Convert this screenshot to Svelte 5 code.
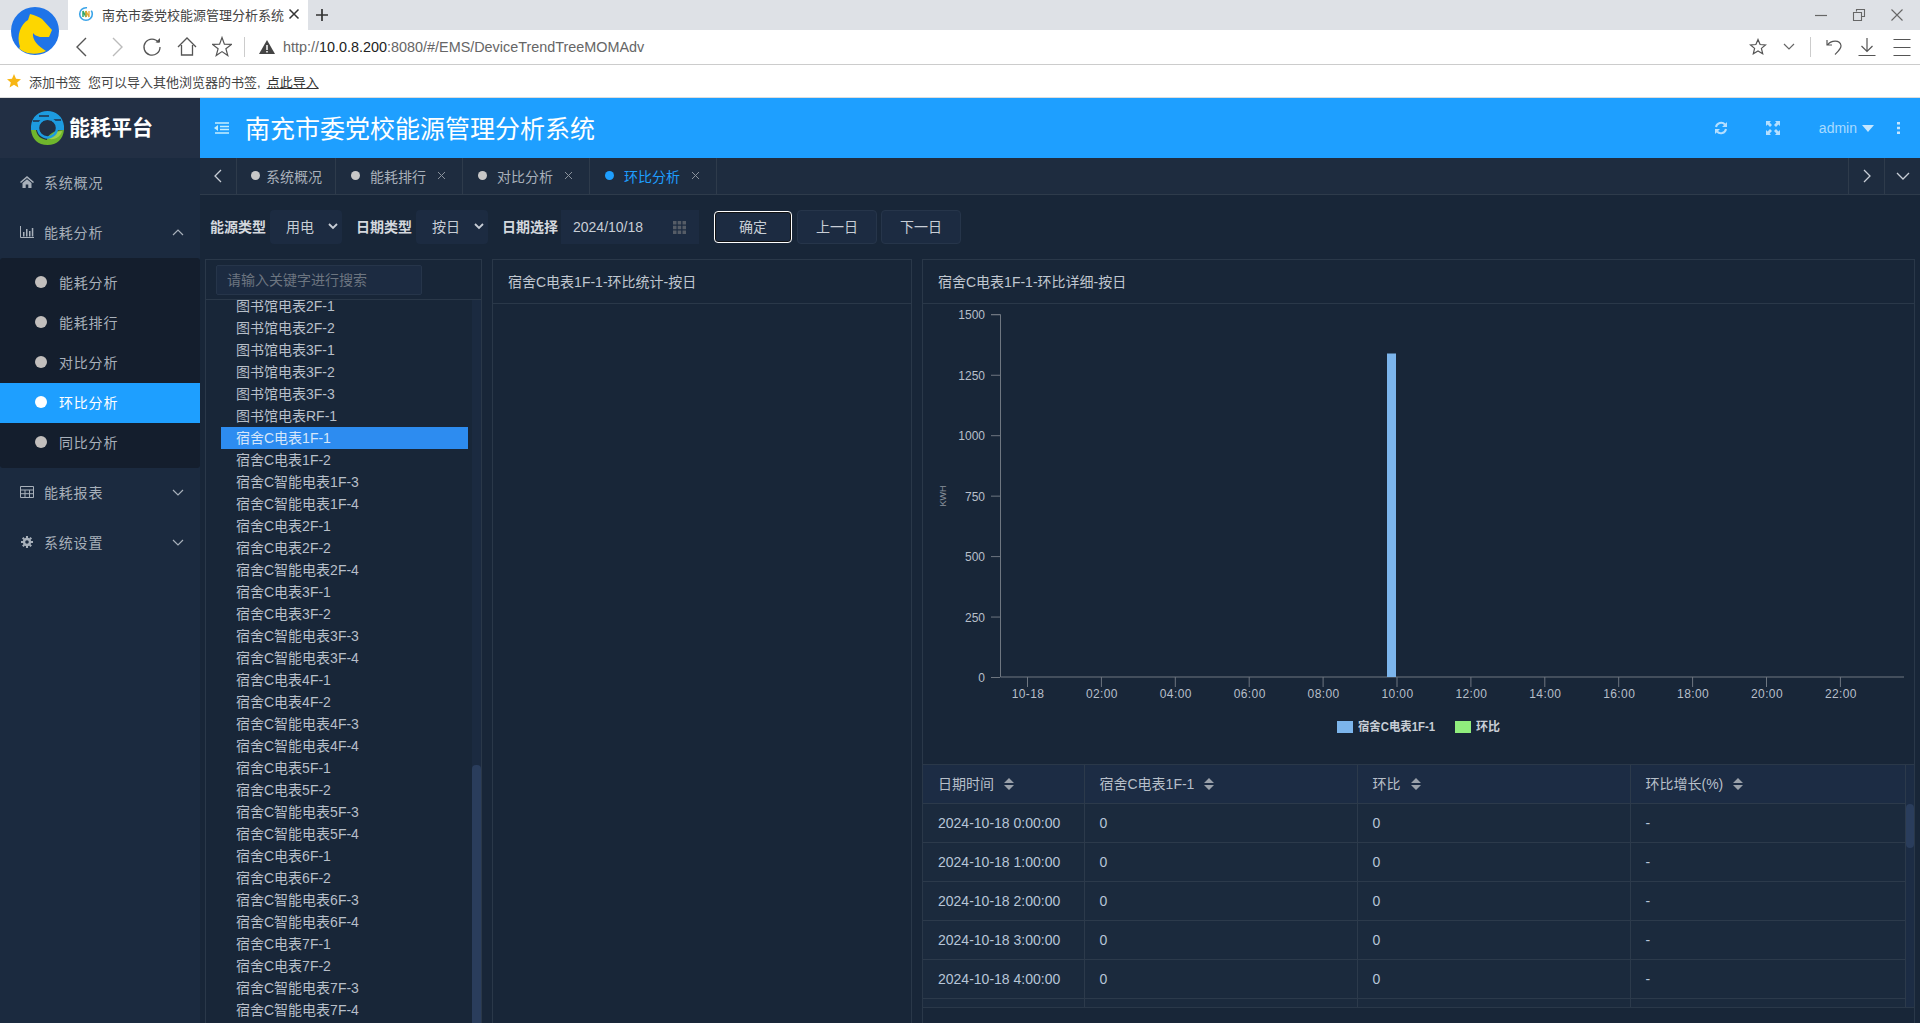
<script>
  const tabs = [
    { name: "系统概况", closable: false },
    { name: "能耗排行", closable: true },
    { name: "对比分析", closable: true },
    { name: "环比分析", closable: true, active: true }
  ];
  const subMenu = ["能耗分析", "能耗排行", "对比分析", "环比分析", "同比分析"];
  const devices = [
    "图书馆电表2F-1", "图书馆电表2F-2", "图书馆电表3F-1", "图书馆电表3F-2", "图书馆电表3F-3", "图书馆电表RF-1",
    "宿舍C电表1F-1", "宿舍C电表1F-2", "宿舍C智能电表1F-3", "宿舍C智能电表1F-4",
    "宿舍C电表2F-1", "宿舍C电表2F-2", "宿舍C智能电表2F-4",
    "宿舍C电表3F-1", "宿舍C电表3F-2", "宿舍C智能电表3F-3", "宿舍C智能电表3F-4",
    "宿舍C电表4F-1", "宿舍C电表4F-2", "宿舍C智能电表4F-3", "宿舍C智能电表4F-4",
    "宿舍C电表5F-1", "宿舍C电表5F-2", "宿舍C智能电表5F-3", "宿舍C智能电表5F-4",
    "宿舍C电表6F-1", "宿舍C电表6F-2", "宿舍C智能电表6F-3", "宿舍C智能电表6F-4",
    "宿舍C电表7F-1", "宿舍C电表7F-2", "宿舍C智能电表7F-3", "宿舍C智能电表7F-4"
  ];
  const selected = "宿舍C电表1F-1";
  const columns = ["日期时间", "宿舍C电表1F-1", "环比", "环比增长(%)"];
  const rows = [0, 1, 2, 3, 4].map((h) => `2024-10-18 ${h}:00:00`);

  // chart uses page coordinates through the viewBox
  const y0 = 676;
  const yStep = 60.45;
  const yTicks = [0, 250, 500, 750, 1000, 1250, 1500];
  const xLabels = ["10-18", "02:00", "04:00", "06:00", "08:00", "10:00", "12:00", "14:00", "16:00", "18:00", "20:00", "22:00"];
</script>

<div class="page">
  <!-- browser chrome -->
  <div class="tabstrip">
    <div class="btab">
      <svg class="favicon" viewBox="0 0 16 16" width="16" height="16">
        <circle cx="8" cy="8" r="6.3" fill="none" stroke="#3aa4e8" stroke-width="1.6" stroke-dasharray="30 5"/>
        <path d="M5 11V5l3 6V5" fill="none" stroke="#2fa66a" stroke-width="1.5"/>
        <path d="M8 11V5l3 6V5" fill="none" stroke="#e8a62c" stroke-width="1.3"/>
      </svg>
      <span class="btitle">南充市委党校能源管理分析系统</span>
      <svg viewBox="0 0 12 12" width="12" height="12"><path d="M1.5 1.5l9 9M10.5 1.5l-9 9" stroke="#333" stroke-width="1.5"/></svg>
    </div>
    <svg class="plus" viewBox="0 0 14 14" width="14" height="14"><path d="M7 1v12M1 7h12" stroke="#333" stroke-width="1.7"/></svg>
    <div class="winctl">
      <svg viewBox="0 0 14 14" width="14" height="14"><path d="M1 7.5h12" stroke="#666" stroke-width="1.2"/></svg>
      <svg viewBox="0 0 14 14" width="14" height="14"><path d="M4.5 3.5V1.5h8v7h-2.5M1.5 4.5h8v8h-8z" fill="none" stroke="#666" stroke-width="1.1"/></svg>
      <svg viewBox="0 0 14 14" width="14" height="14"><path d="M1.500 1.500l11 11M12.500 1.500l-11 11" stroke="#666" stroke-width="1.1"/></svg>
    </div>
  </div>

  <div class="addr">
    <svg class="nav first" viewBox="0 0 20 24" width="20" height="24"><path d="M14 3L5 12l9 9" fill="none" stroke="#555" stroke-width="1.4"/></svg>
    <svg class="nav" viewBox="0 0 20 24" width="20" height="24"><path d="M6 3l9 9-9 9" fill="none" stroke="#bbb" stroke-width="1.4"/></svg>
    <svg class="nav" viewBox="0 0 20 24" width="20" height="24"><path d="M16.500 7.500A8 8 0 1 0 18 12" fill="none" stroke="#555" stroke-width="1.300"/><path d="M13.500 7.500h4.500V3z" fill="#555"/></svg>
    <svg class="nav" viewBox="0 0 20 24" width="20" height="24"><path d="M1 12l9-9 9 9M4.500 10v10h11V10" fill="none" stroke="#555" stroke-width="1.3"/></svg>
    <svg class="nav" viewBox="0 0 20 24" width="20" height="24"><path d="M10 2.500l2.400 6.600 7 .3-5.500 4.300 1.900 6.800-5.800-3.900-5.800 3.900 1.900-6.800L.6 9.400l7-.3z" fill="none" stroke="#555" stroke-width="1.200"/></svg>
    <span class="vline"></span>
    <svg class="warn" viewBox="0 0 16 14" width="16" height="14"><path d="M8 0l8 14H0z" fill="#444"/><path d="M8 5v5M8 11v1.500" stroke="#fff" stroke-width="1.500"/></svg>
    <span class="url">http://<b>10.0.8.200</b>:8080/#/EMS/DeviceTrendTreeMOMAdv</span>
    <div class="addr-right">
      <svg viewBox="0 0 18 18" width="18" height="18"><path d="M9 1.500l2.100 5 5.400.4-4.100 3.500 1.300 5.300L9 12.900l-4.700 2.800 1.300-5.300L1.500 6.900l5.400-.4z" fill="none" stroke="#555" stroke-width="1.200"/></svg>
      <svg class="drop" viewBox="0 0 12 8" width="12" height="8"><path d="M1 1l5 5 5-5" fill="none" stroke="#666" stroke-width="1.200"/></svg>
      <span class="vline short"></span>
      <svg class="undo" viewBox="0 0 16 18" width="16" height="18"><path d="M1 2v5h5M1.500 7C5 2 14 1.500 15 7.500c.4 3-3 6-6 9" fill="none" stroke="#555" stroke-width="1.200"/></svg>
      <svg class="down" viewBox="0 0 18 18" width="18" height="18"><path d="M9 0v13M3.500 8L9 13.500 14.500 8M.5 17.500h17" fill="none" stroke="#555" stroke-width="1.200"/></svg>
      <svg class="menu" viewBox="0 0 18 18" width="18" height="18"><path d="M.5 1.500h17M.5 9.500h17M.5 17.500h17" stroke="#555" stroke-width="1.100"/></svg>
    </div>
  </div>

  <div class="bookmarks">
    <svg viewBox="0 0 14 14" width="14" height="14"><path d="M7 0l2 4.800 5 .4-3.800 3.300 1.200 5L7 10.800 2.600 13.500l1.200-5L0 5.200l5-.4z" fill="#f7b614"/></svg>
    <span class="bm1">添加书签</span>
    <span>您可以导入其他浏览器的书签,</span>
    <u>点此导入</u>
  </div>

  <!-- browser logo lies over the tab strip -->
  <svg class="blogo" viewBox="0 0 48 48" width="48" height="48">
    <circle cx="24" cy="24" r="24" fill="#1f74e8"/>
    <path d="M9 40C5 28 10 17 17 13l2-6c5 1 9 3 12 5l10 11-3 7-9 0c-3-1-6-2-7-4-1 7 5 13 13 18-8 4-21 4-27-3z" fill="#fdd600"/>
  </svg>

  <div class="app">
    <header class="top">
      <div class="brand">
        <svg viewBox="0 0 33 34" width="33" height="34">
          <path d="M0 19C-1 7 7 0 16.500 0S34 7 33 19h-6.500a10 10 0 0 0-20 0z" fill="#1d9be0"/>
          <path d="M8 5h10M20 9h10M2 10h9" stroke="#222f44" stroke-width="1.300"/>
          <path d="M0 19h5c1 6 5 9 11 10 0-5 7-10 17-10-1 9-7 15-16.500 15S1 28 0 19z" fill="#6fb62c"/>
          <path d="M18 28c1-4 7-8 13-8-1 5-6 9-13 8z" fill="#9bd04a"/>
          <circle cx="16.500" cy="17" r="9.500" fill="none" stroke="#1d9be0" stroke-width="2.400"/>
        </svg>
        <span>能耗平台</span>
      </div>
      <svg class="fold" viewBox="0 0 15 12" width="15" height="12"><path d="M1 1h14M1 11h14M6 4.500h9M6 7.500h9" stroke="#c5eeff" stroke-width="1.600"/><path d="M0 6l4-3v6z" fill="#c5eeff"/></svg>
      <h1>南充市委党校能源管理分析系统</h1>
      <div class="top-right">
        <svg viewBox="0 0 14 14" width="14" height="14"><path d="M2 6a5.200 5.200 0 0 1 9-2.500M12 8a5.200 5.200 0 0 1-9 2.500" fill="none" stroke="#b5dfff" stroke-width="2"/><path d="M13 1v5H8zM1 13V8h5z" fill="#b5dfff"/></svg>
        <svg class="full" viewBox="0 0 14 14" width="14" height="14"><path d="M0 0h5L3.600 1.600 6 4 4 6 1.600 3.600 0 5zM14 0v5l-1.600-1.600L10 6 8 4l2.400-2.400L9 0zM0 14V9l1.600 1.600L4 8l2 2-2.400 2.400L5 14zM14 14H9l1.400-1.600L8 10l2-2 2.400 2.400L14 9z" fill="#b5dfff"/></svg>
        <span class="admin">admin</span>
        <svg class="caret" viewBox="0 0 12 7" width="12" height="7"><path d="M0 0h12L6 7z" fill="#c5e6ff"/></svg>
        <svg class="more" viewBox="0 0 3 12" width="3" height="12"><path d="M0 0h3v2.500H0zM0 4.700h3v2.500H0zM0 9.500h3V12H0z" fill="#c5e6ff"/></svg>
      </div>
    </header>

    <div class="body">
      <aside class="side">
        <div class="m-item">
          <svg viewBox="0 0 14 12" width="14" height="12"><path d="M7 0l7 6-1 1-6-5-6 5-1-1zM2.500 7L7 3.300 11.500 7v5H8.300V8.500H5.700V12H2.500z" fill="#a8b0ba"/></svg>
          <span>系统概况</span>
        </div>
        <div class="m-item">
          <svg viewBox="0 0 14 12" width="14" height="12"><path d="M.5 0v11.500H14" fill="none" stroke="#a8b0ba"/><path d="M3 6h1.500v4.500H3zM6 3h1.500v7.500H6zM9 5h1.500v5.500H9zM11.800 2h1.500v8.500h-1.500z" fill="#a8b0ba"/></svg>
          <span>能耗分析</span>
          <svg class="chev" viewBox="0 0 12 7" width="12" height="7"><path d="M1 6l5-5 5 5" fill="none" stroke="#a8b0ba" stroke-width="1.200"/></svg>
        </div>
        <div class="sub">
          {#each subMenu as item}
            <div class="s-item" class:on={item === "环比分析"}><i></i>{item}</div>
          {/each}
        </div>
        <div class="m-item">
          <svg viewBox="0 0 14 12" width="14" height="12"><path d="M.5.500h13v11H.5zM.5 4h13M.5 7.700h13M5 4v7.500M9.500 4v7.500" fill="none" stroke="#a8b0ba"/></svg>
          <span>能耗报表</span>
          <svg class="chev" viewBox="0 0 12 7" width="12" height="7"><path d="M1 1l5 5 5-5" fill="none" stroke="#a8b0ba" stroke-width="1.200"/></svg>
        </div>
        <div class="m-item">
          <svg class="gear" viewBox="0 0 14 14" width="12" height="12"><circle cx="7" cy="7" r="3.500" fill="none" stroke="#a8b0ba" stroke-width="2.800"/><path d="M7 0v14M0 7h14M2 2l10 10M12 2L2 12" stroke="#a8b0ba" stroke-width="2.400" stroke-dasharray="2.500 9 2.500"/></svg>
          <span>系统设置</span>
          <svg class="chev" viewBox="0 0 12 7" width="12" height="7"><path d="M1 1l5 5 5-5" fill="none" stroke="#a8b0ba" stroke-width="1.200"/></svg>
        </div>
      </aside>

      <main class="content">
        <nav class="tabs">
          <div class="t-btn left"><svg viewBox="0 0 8 14" width="8" height="14"><path d="M7 1L1 7l6 6" fill="none" stroke="#c8ced6" stroke-width="1.300"/></svg></div>
          {#each tabs as tab}
            <div class="tab" class:active={tab.active} class:plain={!tab.closable}>
              <i></i><span>{tab.name}</span>
              {#if tab.closable}
                <svg viewBox="0 0 9 9" width="9" height="9"><path d="M1 1l7 7M8 1L1 8" stroke="#8a929c" stroke-width="1"/></svg>
              {/if}
            </div>
          {/each}
          <div class="t-btn right"><svg viewBox="0 0 8 14" width="8" height="14"><path d="M1 1l6 6-6 6" fill="none" stroke="#c8ced6" stroke-width="1.300"/></svg></div>
          <div class="t-btn last"><svg viewBox="0 0 14 8" width="14" height="8"><path d="M1 1l6 6 6-6" fill="none" stroke="#c8ced6" stroke-width="1.300"/></svg></div>
        </nav>

        <div class="filter">
          <label class="first">能源类型</label>
          <div class="select">用电<svg viewBox="0 0 10 7" width="10" height="7"><path d="M1 1l4 4 4-4" fill="none" stroke="#c8ced6" stroke-width="1.800"/></svg></div>
          <label>日期类型</label>
          <div class="select">按日<svg viewBox="0 0 10 7" width="10" height="7"><path d="M1 1l4 4 4-4" fill="none" stroke="#c8ced6" stroke-width="1.800"/></svg></div>
          <label>日期选择</label>
          <div class="date">
            <span>2024/10/18</span>
            <svg viewBox="0 0 13 13" width="13" height="13"><path d="M0 0h3.500v3.500H0zM4.700 0h3.500v3.500H4.700zM9.500 0H13v3.500H9.500zM0 4.700h3.500v3.500H0zM4.700 4.700h3.500v3.500H4.700zM9.500 4.700H13v3.500H9.500zM0 9.500h3.500V13H0zM4.700 9.500h3.500V13H4.700zM9.500 9.500H13V13H9.500z" fill="#555c66"/></svg>
          </div>
          <button class="btn ok">确定</button>
          <button class="btn">上一日</button>
          <button class="btn">下一日</button>
        </div>

        <div class="panels">
          <section class="panel tree">
            <div class="search"><div class="input">请输入关键字进行搜索</div></div>
            <div class="tree-body">
              <ul>
                {#each devices as d}
                  <li class:sel={d === selected}>{d}</li>
                {/each}
              </ul>
              <div class="track"><div class="thumb"></div></div>
            </div>
          </section>

          <section class="panel mid">
            <div class="p-head">宿舍C电表1F-1-环比统计-按日</div>
          </section>

          <section class="panel detail">
            <div class="p-head">宿舍C电表1F-1-环比详细-按日</div>
            <svg class="chart" viewBox="923 303 991 460" width="991" height="460">
              <path d="M991 313.500h9.500V{y0}H1904" fill="none" stroke="#6e7680"/>
              {#each yTicks as t, i}
                <path d="M991 {y0 - i * yStep + 0.5}h9" stroke="#6e7680"/>
                <text class="ax" x="985" y={y0 - i * yStep + 5} text-anchor="end">{t}</text>
              {/each}
              {#each xLabels as l, i}
                <path d="M{1027.500 + i * 73.900} 676v10" stroke="#6e7680"/>
                <text class="ax wide" x={1028 + i * 73.900} y="697" text-anchor="middle">{l}</text>
              {/each}
              <text class="unit" transform="translate(946 495) rotate(-90)" text-anchor="middle">KWH</text>
              <rect x="1387" y="352.500" width="9" height="323.500" fill="#7cb5ec"/>
              <rect x="1337" y="720" width="16" height="12" fill="#7cb5ec"/>
              <text class="lg" x="1358" y="730" textLength="77" lengthAdjust="spacingAndGlyphs">宿舍C电表1F-1</text>
              <rect x="1455" y="720" width="16" height="12" fill="#90ed7d"/>
              <text class="lg" x="1476" y="730">环比</text>
            </svg>
            <div class="grid">
              <table>
                <colgroup><col style="width:161px"/><col style="width:273px"/><col style="width:273px"/><col style="width:275px"/></colgroup>
                <thead>
                  <tr>
                    {#each columns as c}
                      <th><span class="th-t">{c}</span><svg viewBox="0 0 10 12" width="10" height="12"><path d="M5 0l5 5H0zM5 12L0 7h10z" fill="#9aa1aa"/></svg></th>
                    {/each}
                  </tr>
                </thead>
                <tbody>
                  {#each rows as r}
                    <tr><td>{r}</td><td>0</td><td>0</td><td>-</td></tr>
                  {/each}
                  <tr><td></td><td></td><td></td><td></td></tr>
                </tbody>
              </table>
              <div class="g-track"><div class="g-thumb"></div></div>
            </div>
          </section>
        </div>
      </main>
    </div>
  </div>
</div>

<style>
  :global(body) {
    margin: 0;
    background: #182638;
  }

  .page {
    position: relative;
    height: 100vh;
    overflow: hidden;
    display: flex;
    flex-direction: column;
    font-family: "Liberation Sans", "Noto Sans CJK SC", sans-serif;
    font-size: 14px;
    color: #b7bfc9;
  }

  svg {
    display: block;
    flex: none;
  }

  /* browser */
  .tabstrip {
    height: 30px;
    background: #dee1e6;
    display: flex;
    align-items: center;
    flex: none;
  }

  .btab {
    margin-left: 68px;
    width: 240px;
    height: 30px;
    box-sizing: border-box;
    padding: 0 9px 2px 10px;
    background: #fff;
    display: flex;
    align-items: center;
    color: #444;
    font-size: 13px;
  }

  .btitle {
    margin-left: 8px;
    margin-right: 4px;
    white-space: nowrap;
  }

  .plus {
    margin-left: 7px;
  }

  .winctl {
    margin-left: auto;
    margin-right: 16px;
    display: flex;
    gap: 24px;
  }

  .addr {
    height: 34px;
    background: #fff;
    border-bottom: 1px solid #ccc;
    display: flex;
    align-items: center;
    padding-top: 0;
    flex: none;
  }

  .nav {
    margin-left: 15px;
  }

  .nav.first {
    margin-left: 72px;
  }

  .vline {
    width: 1px;
    height: 20px;
    background: #ccc;
    margin-left: 12px;
  }

  .warn {
    margin-left: 14px;
  }

  .url {
    margin-left: 8px;
    font-size: 14.4px;
    color: #666;
    white-space: nowrap;
  }

  .url b {
    font-weight: normal;
    color: #222;
  }

  .addr-right {
    margin-left: auto;
    margin-right: 9px;
    display: flex;
    align-items: center;
  }

  .drop {
    margin-left: 16px;
  }

  .vline.short {
    margin-left: 15px;
  }

  .undo {
    margin-left: 15px;
  }

  .down {
    margin-left: 16px;
  }

  .menu {
    margin-left: 17px;
  }

  .bookmarks {
    height: 32px;
    background: #fff;
    border-bottom: 1px solid #ddd;
    display: flex;
    align-items: center;
    padding-left: 7px;
    font-size: 13px;
    color: #444;
    flex: none;
  }

  .bm1 {
    margin-left: 8px;
    margin-right: 7px;
  }

  .bookmarks u {
    margin-left: 6px;
    color: #333;
  }

  .blogo {
    position: absolute;
    left: 11px;
    top: 7px;
  }

  /* app */
  .app {
    flex: 1;
    display: flex;
    flex-direction: column;
    min-height: 0;
  }

  .top {
    height: 60px;
    flex: none;
    background: #1e9fff;
    display: flex;
    align-items: center;
  }

  .brand {
    width: 200px;
    height: 60px;
    background: #222f44;
    display: flex;
    align-items: center;
    box-sizing: border-box;
    padding-left: 31px;
    flex: none;
  }

  .brand span {
    margin-left: 5px;
    margin-bottom: 4px;
    color: #fff;
    font-size: 21px;
    font-weight: bold;
    white-space: nowrap;
  }

  .fold {
    margin-left: 14px;
  }

  h1 {
    margin: 0 0 2px 16px;
    font-size: 25px;
    font-weight: normal;
    color: #fff;
    white-space: nowrap;
  }

  .top-right {
    margin-left: auto;
    display: flex;
    align-items: center;
    color: #a8dbff;
    padding-right: 20px;
  }

  .full {
    margin-left: 38px;
  }

  .admin {
    margin-left: 39px;
  }

  .caret {
    margin-left: 5px;
  }

  .more {
    margin-left: 23px;
  }

  .body {
    flex: 1;
    display: flex;
    min-height: 0;
  }

  .side {
    width: 200px;
    flex: none;
    background: #1b2a3f;
  }

  .m-item {
    height: 50px;
    box-sizing: border-box;
    display: flex;
    align-items: center;
    padding: 0 16px 2px 20px;
    letter-spacing: 0.8px;
    color: #a8b0ba;
  }

  .m-item span {
    margin-left: 10px;
  }

  .gear {
    margin: 0 1px;
  }

  .chev {
    margin-left: auto;
  }

  .sub {
    background: #141e2d;
    padding: 5px 0;
    border-radius: 3px;
  }

  .s-item {
    height: 40px;
    box-sizing: border-box;
    display: flex;
    align-items: center;
    padding: 0 0 2px 35px;
    letter-spacing: 0.8px;
    color: #a8b0ba;
  }

  .s-item i {
    width: 12px;
    height: 12px;
    border-radius: 50%;
    background: #c2bebc;
    margin-right: 12px;
    flex: none;
  }

  .s-item.on {
    background: #1e9fff;
    color: #fff;
  }

  .s-item.on i {
    background: #fff;
  }

  .content {
    flex: 1;
    min-width: 0;
    display: flex;
    flex-direction: column;
    background: #182638;
  }

  .tabs {
    height: 36px;
    flex: none;
    box-sizing: content-box;
    background: #1e2c3f;
    border-bottom: 1px solid #2e3b4b;
    display: flex;
  }

  .t-btn {
    display: flex;
    align-items: center;
    justify-content: center;
  }

  .t-btn.left {
    width: 36px;
    border-right: 1px solid #2e3b4b;
  }

  .t-btn.right {
    margin-left: auto;
    width: 35px;
    border-left: 1px solid #2e3b4b;
  }

  .t-btn.last {
    width: 35px;
    border-left: 1px solid #2e3b4b;
  }

  .tab {
    width: 127px;
    box-sizing: border-box;
    padding: 0 16px 1px 15px;
    border-right: 1px solid #2e3b4b;
    display: flex;
    align-items: center;
    color: #a8b0ba;
  }

  .tab.plain {
    width: 99px;
    padding-left: 14px;
    padding-right: 0;
  }

  .tab i {
    width: 9px;
    height: 9px;
    border-radius: 50%;
    background: #c8c8c8;
    margin-right: 10px;
    flex: none;
  }

  .tab.plain i {
    margin-right: 6px;
  }

  .tab span {
    margin-right: 11px;
    white-space: nowrap;
  }

  .tab.plain span {
    margin-right: 0;
  }

  .tab.active {
    color: #1e9fff;
  }

  .tab.active i {
    background: #1e9fff;
  }

  .filter {
    display: flex;
    align-items: center;
    height: 34px;
    flex: none;
    padding: 15px 0 15px 10px;
    color: #c8ced6;
  }

  label {
    font-weight: bold;
    margin-left: 14px;
    margin-right: 4px;
    padding-bottom: 2px;
    white-space: nowrap;
    color: #d4d8de;
  }

  label.first {
    margin-left: 0;
    margin-right: 4px;
  }

  .select {
    width: 72px;
    height: 34px;
    box-sizing: border-box;
    padding: 0 4px 2px 16px;
    background: #1c2b41;
    border-radius: 4px;
    display: flex;
    align-items: center;
    justify-content: space-between;
  }

  .date {
    width: 138px;
    height: 34px;
    box-sizing: border-box;
    padding: 0 13px 0 12px;
    background: #1c2b41;
    display: flex;
    align-items: center;
    justify-content: space-between;
    margin-left: -1px;
  }

  .btn {
    width: 80px;
    height: 34px;
    margin-left: 4px;
    background: #1c2b41;
    border: 1px solid #26354a;
    border-radius: 4px;
    color: #c8ced6;
    font: inherit;
    padding: 0 0 2px;
  }

  .btn.ok {
    width: 78px;
    height: 32px;
    margin-left: 15px;
    margin-right: 1px;
    border: 1.500px solid #fff;
    box-shadow: inset 0 0 0 1px #111;
  }

  .panels {
    flex: 1;
    min-height: 0;
    display: flex;
    gap: 10px;
    padding: 0 5px;
  }

  .panel {
    border: 1px solid #2a3849;
    border-bottom: none;
    box-sizing: border-box;
    overflow: hidden;
    display: flex;
    flex-direction: column;
  }

  .tree {
    width: 277px;
    flex: none;
  }

  .mid {
    width: 420px;
    flex: none;
  }

  .detail {
    flex: 1;
    min-width: 0;
  }

  .p-head {
    height: 43px;
    flex: none;
    box-sizing: content-box;
    padding-left: 15px;
    line-height: 44px;
    border-bottom: 1px solid #2a3849;
    color: #c0c7d0;
  }

  .search {
    height: 40px;
    flex: none;
    box-sizing: border-box;
    border-bottom: 1px solid #2a3849;
    padding: 5px 0 0 10px;
  }

  .input {
    width: 206px;
    height: 30px;
    box-sizing: border-box;
    background: #1c2b41;
    border: 1px solid #26354a;
    border-radius: 2px;
    line-height: 28px;
    padding-left: 10px;
    color: #6c7580;
  }

  .tree-body {
    flex: 1;
    min-height: 0;
    display: flex;
    overflow: hidden;
  }

  ul {
    list-style: none;
    margin: -5px 0 0;
    padding: 0 0 0 15px;
    width: 247px;
    flex: none;
  }

  li {
    height: 22px;
    line-height: 22px;
    padding-left: 15px;
    white-space: nowrap;
  }

  li.sel {
    background: #2d8cf0;
    color: #d5e6fa;
  }

  .track {
    margin-left: auto;
    width: 9px;
    background: #1b2a40;
    display: flex;
    flex-direction: column;
    justify-content: flex-end;
  }

  .thumb {
    height: 258px;
    background: #2a3d5c;
    border-radius: 4px 4px 0 0;
  }

  .chart {
    flex: none;
  }

  .ax {
    font-size: 12px;
    fill: #b7bfc9;
  }

  .ax.wide {
    letter-spacing: 0.4px;
  }

  .unit {
    font-size: 9px;
    fill: #8a929c;
  }

  .lg {
    font-size: 12px;
    font-weight: bold;
    fill: #c8ced6;
  }

  .grid {
    height: 242px;
    flex: none;
    border-top: 1px solid #2a3849;
    border-bottom: 1px solid #2a3849;
    display: flex;
    overflow: hidden;
    background: #1b2a3d;
  }

  table {
    width: 982px;
    flex: none;
    table-layout: fixed;
    border-collapse: collapse;
    align-self: flex-start;
  }

  th {
    height: 38px;
    background: #1c2c44;
    font-weight: normal;
    text-align: left;
    padding: 0 0 1px 15px;
    box-sizing: border-box;
    border-right: 1px solid #2c3a4b;
    border-bottom: 1px solid #2c3a4b;
    color: #b7bfc9;
  }

  th svg {
    display: inline-block;
    vertical-align: -1px;
    margin-left: 10px;
  }

  td {
    height: 38px;
    padding: 0 0 0 15px;
    font-size: 14px;
    border-right: 1px solid #2c3a4b;
    border-bottom: 1px solid #2c3a4b;
    color: #b7c6d8;
  }

  .g-track {
    flex: 1;
    background: #1c2c44;
  }

  .g-thumb {
    margin-top: 39px;
    height: 44px;
    background: #2a3d5c;
    border-radius: 4px;
  }
</style>
